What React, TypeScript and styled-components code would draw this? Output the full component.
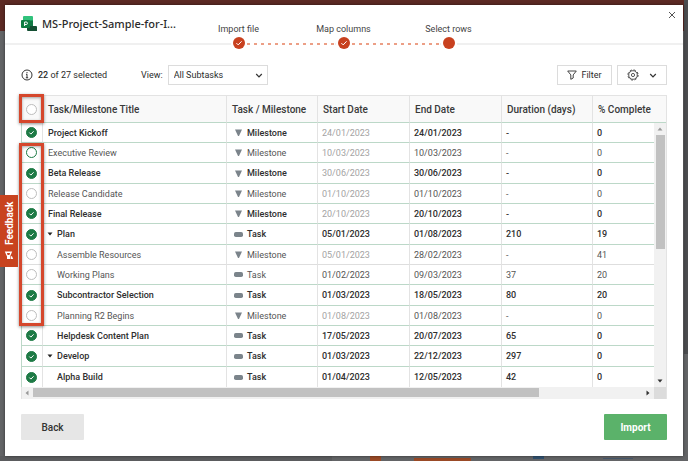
import React, { useState } from "react";
import styled, { createGlobalStyle } from "styled-components";

const GlobalStyle = createGlobalStyle`
  *, *::before, *::after { box-sizing: border-box; }
  html, body, #root { height: 100%; }
  body {
    margin: 0;
    font-family: Roboto, "Liberation Sans", sans-serif;
    font-size: 9px;
    color: #2b2b2b;
    background: #636466;
  }
  button, select, input { font: inherit; color: inherit; margin: 0; }
`;

const Page = styled.div`
  position: relative;
  min-height: 100%;
  padding: 5px;
  display: flex;
  background: linear-gradient(#5c2a24 31px, #636466 31px);
`;

const Backdrop = styled.svg`
  position: absolute;
  left: 0;
  bottom: 0;
  width: 100%;
  height: 5px;
`;

const PageScroll = styled.div`
  position: absolute;
  top: 0;
  right: 0;
  width: 4px;
  height: 354px;
  background: #4b4c4f;
`;

const Dialog = styled.section`
  position: relative;
  flex: 1;
  min-width: 0;
  display: flex;
  flex-direction: column;
  background: #fff;
  box-shadow: 0 0 3px rgba(0, 0, 0, 0.5);
`;

const Header = styled.header`
  height: 40px;
  padding: 0 16px;
  display: flex;
  border-bottom: 2px solid #f0f0f0;
`;

const FileTitle = styled.h1`
  width: 165px;
  margin: 0;
  display: flex;
  align-items: center;
  gap: 5px;
  font: 500 11px/16px "Noto Sans", "Open Sans", sans-serif;
  white-space: nowrap;
`;

const Steps = styled.ol`
  list-style: none;
  margin: 0;
  padding: 18px 0 0;
  display: flex;
`;

const Step = styled.li`
  position: relative;
  width: 105px;
  height: 28px;
  display: flex;
  flex-direction: column;
  align-items: center;
  gap: 2px;
  line-height: 12px;
  color: #444;

  &:not(:last-child)::after {
    content: "";
    position: absolute;
    left: 61px;
    right: -44px;
    top: 20px;
    height: 2px;
    background: repeating-linear-gradient(90deg, #ec9f86 0 3px, #fff 3px 7px);
  }
`;

const StepDot = styled.span`
  width: 16px;
  height: 12px;
  display: flex;
  justify-content: center;
  background: #fff;
`;

const CloseButton = styled.button`
  position: absolute;
  top: 4px;
  right: 5px;
  width: 12px;
  height: 12px;
  padding: 0;
  border: 0;
  background: none;
  display: grid;
  place-items: center;
`;

const Body = styled.main`
  flex: 1;
  padding: 20px 16px 0;
  display: flex;
  flex-direction: column;
`;

const Toolbar = styled.div`
  display: flex;
  align-items: center;
  height: 20px;
  margin-bottom: 10px;
`;

const Count = styled.p`
  margin: 0;
  width: 120px;
  display: flex;
  align-items: center;
  gap: 5px;
  strong { font-weight: 500; }
`;

const ViewLabel = styled.label`
  display: flex;
  align-items: center;
  gap: 5px;
`;

const SelectBox = styled.span`
  position: relative;
  display: flex;
  svg { position: absolute; right: 5px; top: 8px; pointer-events: none; }
`;

const ViewSelect = styled.select`
  appearance: none;
  width: 100px;
  height: 20px;
  padding: 0 5px;
  border: 1px solid #dcdcdc;
  background: #fff;
`;

const Tools = styled.div`
  margin-left: auto;
  display: flex;
  gap: 5px;
`;

const ToolButton = styled.button<{ $width: number }>`
  width: ${(p) => p.$width}px;
  height: 20px;
  padding: 0;
  display: flex;
  align-items: center;
  justify-content: center;
  gap: ${(p) => (p.$width > 52 ? 4 : 10)}px;
  border: 1px solid #dcdcdc;
  background: #fff;
`;

const Grid = styled.div`
  position: relative;
  border: 1px solid #e3e3e3;
  border-bottom-width: 0;
`;

const Table = styled.table`
  width: 100%;
  table-layout: fixed;
  border-collapse: separate;
  border-spacing: 0;
`;

const Col = styled.col<{ $width?: number }>`
  width: ${(p) => (p.$width ? `${p.$width}px` : "auto")};
`;

const HeadCell = styled.th`
  height: 27px;
  padding: 0 5px;
  text-align: left;
  font-size: 10px;
  font-weight: 500;
  color: #3a3a3a;
  white-space: nowrap;
  background: #f9f9f9;
  border-bottom: 1px solid #bcd8c8;
  &:not(:last-child) { border-right: 1px solid #e3e3e3; }
  &:first-child { padding: 0 5px 0 4px; }
`;

const Row = styled.tr<{ $selected: boolean; $plain: boolean }>`
  height: 20px;
  color: ${(p) => (p.$selected ? "#2e2e2e" : "#555")};
  font-weight: ${(p) => (p.$selected ? 500 : 400)};
  &:nth-child(3n) { height: 21px; }
  td { border-bottom: 1px solid ${(p) => (p.$plain ? "#dedede" : "#bcd8c8")}; }
  &:last-child td { border-bottom: 0; }
`;

const Cell = styled.td<{ $muted?: boolean }>`
  padding: 0 4px;
  line-height: 12px;
  white-space: nowrap;
  color: ${(p) => (p.$muted ? "#a3a3a3" : "inherit")};
  font-weight: ${(p) => (p.$muted ? 400 : "inherit")};
  &:not(:last-child) { border-right: 1px solid #e3e3e3; }
  &:first-child { box-shadow: -1px 0 0 #bcd8c8; }
`;

const Name = styled.div<{ $level: number }>`
  display: flex;
  align-items: center;
  gap: 4px;
  padding-left: ${(p) => [1, 0, 10][p.$level]}px;
`;

const Kind = styled.div`
  display: flex;
  align-items: center;
  gap: 4px;
  padding-left: 3px;
`;

const Check = styled.input<{ $active?: boolean }>`
  appearance: none;
  display: block;
  width: 11px;
  height: 11px;
  border: 1px solid ${(p) => (p.$active ? "#1d7a45" : "#bdbdbd")};
  border-radius: 50%;
  background: #fff;
  &:checked {
    border-color: #1d7a45;
    background: #1d7a45 url("data:image/svg+xml,%3Csvg xmlns='http://www.w3.org/2000/svg' viewBox='0 0 9 9'%3E%3Cpath d='M2.4 4.6l1.5 1.5 2.7-2.8' fill='none' stroke='white'/%3E%3C/svg%3E") center / 9px no-repeat;
  }
`;

const VScroll = styled.div`
  position: absolute;
  top: 27px;
  right: 0;
  bottom: 12px;
  width: 12px;
  padding: 4px 1px;
  display: flex;
  flex-direction: column;
  align-items: center;
  gap: 4px;
  background: #f1f1f1;
`;

const VThumb = styled.div`
  width: 9px;
  height: 114px;
  margin-bottom: auto;
  background: #c1c1c1;
`;

const HScroll = styled.div`
  height: 12px;
  padding: 1px 0 2px 3px;
  display: flex;
  align-items: center;
  gap: 4px;
  background: #f1f1f1;
`;

const HThumb = styled.div`
  width: 79%;
  height: 9px;
  margin-right: auto;
  background: #c1c1c1;
`;

const ScrollCorner = styled.div`
  width: 12px;
  height: 12px;
  background: #dcdcdc;
`;

const Highlight = styled.div<{ $top: number; $height: number }>`
  position: absolute;
  left: -3px;
  top: ${(p) => p.$top}px;
  width: 25px;
  height: ${(p) => p.$height}px;
  border: 3px solid #d5472c;
  box-shadow: 0 1px 3px rgba(0, 0, 0, 0.45), inset 0 1px 3px rgba(0, 0, 0, 0.35);
  pointer-events: none;
`;

const Footer = styled.footer`
  padding: 15px 0 16px;
  display: flex;
  justify-content: space-between;
`;

const ActionButton = styled.button<{ $primary?: boolean }>`
  width: 63px;
  height: 26px;
  padding: 0;
  border: 0;
  border-radius: 1px;
  font-size: 10px;
  font-weight: ${(p) => (p.$primary ? 700 : 500)};
  color: ${(p) => (p.$primary ? "#fff" : "#333")};
  background: ${(p) => (p.$primary ? "#5bb26a" : "#e6e6e6")};
`;

const Feedback = styled.button`
  position: absolute;
  left: 0;
  top: 195px;
  width: 18px;
  height: 72px;
  padding: 0;
  border: 0;
  display: flex;
  align-items: center;
  justify-content: center;
  gap: 5px;
  writing-mode: vertical-rl;
  transform: rotate(180deg);
  font-size: 10px;
  font-weight: 700;
  color: #fff;
  background: #c8431f;
`;

const ProjectIcon = () => (
  <svg width="16" height="16" viewBox="0 0 16 16" aria-hidden="true">
    <path d="M3 0h8q1 0 1 1v4H2V1q0-1 1-1z" fill="#31c27c" />
    <path d="M2 4h10v7H2z" fill="#1f9c5b" />
    <path d="M6 10h9q1 0 1 1v4H7q-1 0-1-1z" fill="#154f33" />
    <path d="M6 5h6v5H6z" fill="#127a45" />
    <rect x="0" y="4" width="9" height="8" rx="1" fill="#0f7d42" />
    <path d="M3.6 10V6h1.6a1.2 1.2 0 0 1 0 2.5H3.6" fill="none" stroke="#fff" />
  </svg>
);

const Chevron = () => (
  <svg width="8" height="5" viewBox="0 0 8 5" fill="none" stroke="#333" strokeWidth="1.2" aria-hidden="true">
    <path d="M1.2 1L4 3.8 6.8 1" />
  </svg>
);

const Gear = () => (
  <svg width="12" height="12" viewBox="0 0 12 12" fill="none" stroke="#444" aria-hidden="true">
    <circle cx="6" cy="6" r="5.1" strokeWidth="1" strokeDasharray="2.2 1.8" />
    <circle cx="6" cy="6" r="4.3" strokeWidth="0.9" />
    <circle cx="6" cy="6" r="1.6" strokeWidth="0.9" />
  </svg>
);

const Arrow = ({ d, w, h, fill }: { d: string; w: number; h: number; fill: string }) => (
  <svg width={w} height={h} viewBox={`0 0 ${w} ${h}`} aria-hidden="true">
    <path d={d} fill={fill} />
  </svg>
);

const KindIcon = ({ milestone }: { milestone: boolean }) => (
  <svg width="9" height="7" viewBox="0 0 9 7" fill="#7b848b" aria-hidden="true">
    {milestone ? <path d="M1 0.5h7L5 7H4z" /> : <rect y="1" width="9" height="5" rx="1.8" />}
  </svg>
);

type Task = {
  name: string;
  level: number;
  milestone?: boolean;
  start: string;
  muted?: boolean;
  end: string;
  days: string;
  done: string;
  selected?: boolean;
};

const tasks: Task[] = [
  { name: "Project Kickoff", level: 0, milestone: true, start: "24/01/2023", muted: true, end: "24/01/2023", days: "-", done: "0", selected: true },
  { name: "Executive Review", level: 0, milestone: true, start: "10/03/2023", muted: true, end: "10/03/2023", days: "-", done: "0" },
  { name: "Beta Release", level: 0, milestone: true, start: "30/06/2023", muted: true, end: "30/06/2023", days: "-", done: "0", selected: true },
  { name: "Release Candidate", level: 0, milestone: true, start: "01/10/2023", muted: true, end: "01/10/2023", days: "-", done: "0" },
  { name: "Final Release", level: 0, milestone: true, start: "20/10/2023", muted: true, end: "20/10/2023", days: "-", done: "0", selected: true },
  { name: "Plan", level: 1, start: "05/01/2023", end: "01/08/2023", days: "210", done: "19", selected: true },
  { name: "Assemble Resources", level: 2, milestone: true, start: "05/01/2023", muted: true, end: "28/02/2023", days: "-", done: "41" },
  { name: "Working Plans", level: 2, start: "01/02/2023", end: "09/03/2023", days: "37", done: "20" },
  { name: "Subcontractor Selection", level: 2, start: "01/03/2023", end: "18/05/2023", days: "80", done: "20", selected: true },
  { name: "Planning R2 Begins", level: 2, milestone: true, start: "01/08/2023", muted: true, end: "01/08/2023", days: "-", done: "0" },
  { name: "Helpdesk Content Plan", level: 2, start: "17/05/2023", end: "20/07/2023", days: "65", done: "0", selected: true },
  { name: "Develop", level: 1, start: "01/03/2023", end: "22/12/2023", days: "297", done: "0", selected: true },
  { name: "Alpha Build", level: 2, start: "01/04/2023", end: "12/05/2023", days: "42", done: "0", selected: true },
];

const columns = ["Task/Milestone Title", "Task / Milestone", "Start Date", "End Date", "Duration (days)", "% Complete"];
const steps = ["Import file", "Map columns", "Select rows"];

export default function App() {
  const [selected, setSelected] = useState(tasks.map((t) => !!t.selected));
  const toggle = (i: number) => setSelected((s) => s.map((v, j) => (j === i ? !v : v)));

  return (
    <Page>
      <GlobalStyle />
      <Backdrop viewBox="0 0 688 5" preserveAspectRatio="none" aria-hidden="true">
        <path d="M0 0h332v5H0z" fill="#5b5c5e" />
        <path d="M370 0h11v5h-11zM414 2h57v3h-57z" fill="#9a4a26" />
        <path d="M533 0h11v3h-11z" fill="#31516f" />
        <path d="M603 2h30v1h-30z" fill="#46586b" />
      </Backdrop>
      <PageScroll />
      <Dialog role="dialog" aria-label="Import tasks">
        <Header>
          <FileTitle>
            <ProjectIcon />
            MS-Project-Sample-for-I...
          </FileTitle>
          <Steps>
            {steps.map((label, i) => (
              <Step key={label}>
                {label}
                <StepDot>
                  <svg width="12" height="12" viewBox="0 0 12 12" aria-hidden="true">
                    <circle cx="6" cy="6" r="6" fill="#c8411f" />
                    {i < 2 && <path d="M3.4 6.1l1.8 1.8 3.4-3.6" fill="none" stroke="#fff" />}
                  </svg>
                </StepDot>
              </Step>
            ))}
          </Steps>
        </Header>
        <CloseButton aria-label="Close">
          <svg width="8" height="8" viewBox="0 0 8 8" stroke="#555" aria-hidden="true">
            <path d="M1 1l6 6M7 1L1 7" />
          </svg>
        </CloseButton>
        <Body>
          <Toolbar>
            <Count>
              <svg width="12" height="12" viewBox="0 0 12 12" fill="none" stroke="#333" aria-hidden="true">
                <circle cx="6" cy="6" r="5" />
                <path d="M6 3v1.2M6 5.2V9M5 5.3h1M4.8 8.8h2.4" />
              </svg>
              <span>
                <strong>22</strong> of 27 selected
              </span>
            </Count>
            <ViewLabel>
              View:
              <SelectBox>
                <ViewSelect defaultValue="all">
                  <option value="all">All Subtasks</option>
                </ViewSelect>
                <Chevron />
              </SelectBox>
            </ViewLabel>
            <Tools>
              <ToolButton $width={55}>
                <svg width="10" height="10" viewBox="0 0 10 10" fill="none" stroke="#444" aria-hidden="true">
                  <path d="M.7 1h8.6L6.2 4.9V8L3.8 9.3V4.9z" />
                </svg>
                Filter
              </ToolButton>
              <ToolButton $width={50} aria-label="Settings">
                <Gear />
                <Chevron />
              </ToolButton>
            </Tools>
          </Toolbar>
          <Grid>
            <Table>
              <colgroup>
                <Col $width={21} />
                <Col $width={184} />
                <Col $width={91} />
                <Col $width={92} />
                <Col $width={92} />
                <Col $width={91} />
                <Col />
              </colgroup>
              <thead>
                <tr>
                  <HeadCell scope="col">
                    <Check type="checkbox" aria-label="Select all rows" />
                  </HeadCell>
                  {columns.map((c) => (
                    <HeadCell key={c} scope="col">
                      {c}
                    </HeadCell>
                  ))}
                </tr>
              </thead>
              <tbody>
                {tasks.map((t, i) => (
                  <Row key={t.name} $selected={selected[i]} $plain={!selected[i] && !selected[i + 1]}>
                    <Cell>
                      <Check
                        type="checkbox"
                        aria-label={`Select ${t.name}`}
                        checked={selected[i]}
                        onChange={() => toggle(i)}
                        $active={i === 1}
                      />
                    </Cell>
                    <Cell>
                      <Name $level={t.level}>
                        {t.level === 1 && <Arrow w={6} h={4} d="M.5 .5h5L3 3.5z" fill="#222" />}
                        {t.name}
                      </Name>
                    </Cell>
                    <Cell>
                      <Kind>
                        <KindIcon milestone={!!t.milestone} />
                        {t.milestone ? "Milestone" : "Task"}
                      </Kind>
                    </Cell>
                    <Cell $muted={t.muted}>{t.start}</Cell>
                    <Cell>{t.end}</Cell>
                    <Cell>{t.days}</Cell>
                    <Cell>{t.done}</Cell>
                  </Row>
                ))}
              </tbody>
            </Table>
            <VScroll aria-hidden="true">
              <Arrow w={6} h={4} d="M3 .5l2.5 3h-5z" fill="#999" />
              <VThumb />
              <Arrow w={6} h={4} d="M.5 .5h5L3 3.5z" fill="#333" />
            </VScroll>
            <HScroll aria-hidden="true">
              <Arrow w={4} h={6} d="M3.5 .5v5L.5 3z" fill="#999" />
              <HThumb />
              <Arrow w={4} h={6} d="M.5 .5v5L3.5 3z" fill="#333" />
              <ScrollCorner />
            </HScroll>
            <Highlight $top={-2} $height={29} />
            <Highlight $top={47} $height={183} />
          </Grid>
          <Footer>
            <ActionButton>Back</ActionButton>
            <ActionButton $primary>Import</ActionButton>
          </Footer>
        </Body>
      </Dialog>
      <Feedback>
        <svg width="10" height="10" viewBox="0 0 10 10" fill="#fff" aria-hidden="true">
          <path d="M4 1h3v2.4L9.2 8.5H1.8L4 3.4zM.8 1h2.6v2.8H2z" />
          <path d="M4.6 5h1.8l.7 2H3.9z" fill="#c8431f" />
        </svg>
        Feedback
      </Feedback>
    </Page>
  );
}
